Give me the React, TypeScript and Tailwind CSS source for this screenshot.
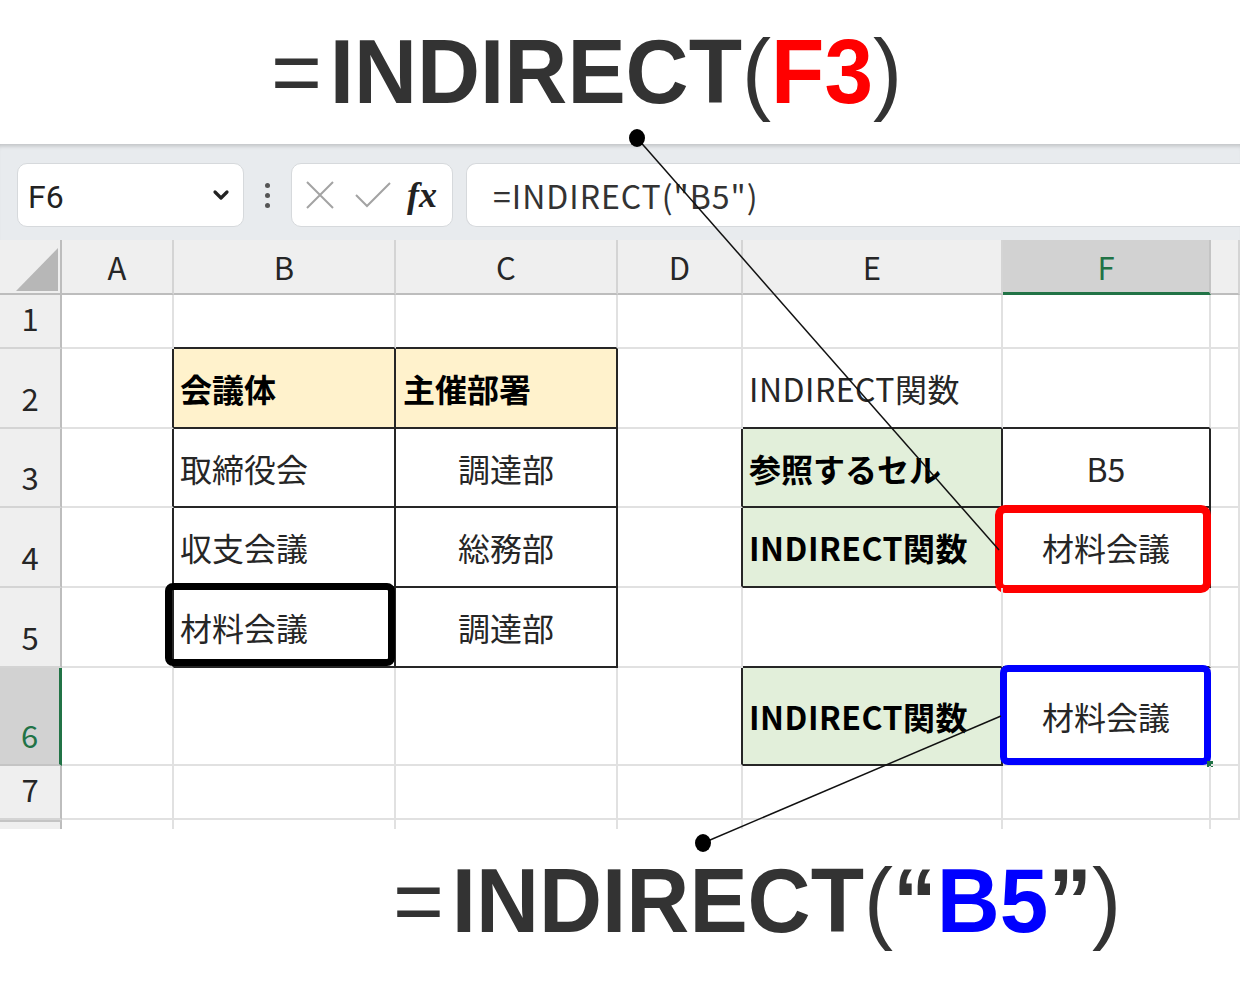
import { ChevronDown } from "lucide-react";
import type { ReactNode } from "react";

const RB: Record<string, string> = {
  g: "border-r-2 border-r-[#e1e1e1]",
  k: "border-r-2 border-r-[#262626]",
};
const BB: Record<string, string> = {
  g: "border-b-2 border-b-[#e1e1e1]",
  k: "border-b-2 border-b-[#262626]",
};

function Cell({
  r = "g",
  b = "g",
  className = "",
  children,
}: {
  r?: string;
  b?: string;
  className?: string;
  children?: ReactNode;
}) {
  return (
    <div className={`relative flex items-center text-[32px] leading-none text-[#262626] ${RB[r]} ${BB[b]} ${className}`}>
      {children}
    </div>
  );
}

function ColHead({ children, sel = false }: { children: ReactNode; sel?: boolean }) {
  return sel ? (
    <div className="flex items-center justify-center bg-[#d2d2d2] border-r-2 border-r-[#c4c4c4] border-b-[3px] border-b-[#217346] text-[31px] leading-none text-[#217346]">
      {children}
    </div>
  ) : (
    <div className="flex items-center justify-center bg-[#efefef] border-r-2 border-r-[#d4d4d4] border-b-2 border-b-[#bdbdbd] text-[31px] leading-none text-[#262626]">
      {children}
    </div>
  );
}

function RowHead({ children, sel = false }: { children?: ReactNode; sel?: boolean }) {
  return sel ? (
    <div className="flex items-end justify-center pb-[14px] bg-[#d2d2d2] border-r-[3px] border-r-[#217346] border-b-2 border-b-[#c4c4c4] text-[31px] leading-none text-[#217346]">
      {children}
    </div>
  ) : (
    <div className="flex items-end justify-center pb-[14px] bg-[#efefef] border-r-2 border-r-[#bdbdbd] border-b-2 border-b-[#d4d4d4] text-[31px] leading-none text-[#262626]">
      {children}
    </div>
  );
}

export default function App() {
  return (
    <div className="relative w-[1240px] h-[1006px] overflow-hidden bg-white font-['Noto_Sans_CJK_JP','Noto_Sans',sans-serif]">
      {/* top title */}
      <div className="h-[144px] pl-[271px] pt-[27px]">
        <div className="flex origin-left scale-x-[0.97] font-['Liberation_Sans',Arial,sans-serif] font-bold text-[90px] leading-none text-[#333333]">
          <span className="mr-[8px] font-normal">=</span>
          <span>INDIRECT</span>
          <span className="font-normal">(</span>
          <span className="text-[#ff0000]">F3</span>
          <span className="font-normal">)</span>
        </div>
      </div>

      {/* formula band */}
      <div className="h-[96px] bg-[#e8ebee] flex items-start pt-[19px] shadow-[inset_0_5px_4px_-3px_rgba(0,0,0,0.18)]">
        <div className="ml-[17px] w-[227px] h-[64px] bg-white rounded-[10px] border border-[#d6d9dc] flex items-center justify-between pl-[10px] pr-[10px]">
          <span className="text-[32px] leading-none text-[#222] font-['Roboto',sans-serif] pt-[4px]">F6</span>
          <ChevronDown strokeWidth={3.2} className="w-[24px] h-[24px] text-[#222]" />
        </div>
        <div className="w-[47px] h-[64px] flex flex-col items-center justify-center gap-[5px]">
          <span className="w-[5px] h-[5px] rounded-full bg-[#555]" />
          <span className="w-[5px] h-[5px] rounded-full bg-[#555]" />
          <span className="w-[5px] h-[5px] rounded-full bg-[#555]" />
        </div>
        <div className="w-[162px] h-[64px] bg-white rounded-[10px] border border-[#d6d9dc] flex items-center pl-[13px] gap-[20px]">
          <svg width="30" height="28" viewBox="0 0 30 28">
            <path d="M2 1 L28 27 M28 1 L2 27" stroke="#a3a3a3" strokeWidth="2" fill="none" />
          </svg>
          <svg width="36" height="26" viewBox="0 0 36 26">
            <path d="M1 13 L12 24 L35 1" stroke="#a3a3a3" strokeWidth="2" fill="none" />
          </svg>
          <span className="font-['Liberation_Serif',serif] italic font-bold text-[36px] leading-none text-[#222] -ml-[4px]">fx</span>
        </div>
        <div className="ml-[13px] flex-1 h-[64px] bg-white rounded-l-[10px] border border-[#d6d9dc] border-r-0 flex items-center pl-[26px] text-[32px] tracking-[1px] leading-none text-[#333]">
          =INDIRECT("B5")
        </div>
      </div>

      {/* grid */}
      <div className="grid grid-cols-[62px_112px_222px_222px_125px_260px_208px_29px] grid-rows-[55px_54px_80px_79px_80px_80px_98px_54px_9px]">
        {/* header row */}
        <div className="relative bg-[#efefef] border-r-2 border-r-[#bdbdbd] border-b-2 border-b-[#bdbdbd]">
          <svg className="absolute left-[16px] top-[8px]" width="42" height="43" viewBox="0 0 42 43">
            <polygon points="0,43 42,0 42,43" fill="#b7b7b7" />
          </svg>
        </div>
        <ColHead>A</ColHead>
        <ColHead>B</ColHead>
        <ColHead>C</ColHead>
        <ColHead>D</ColHead>
        <ColHead>E</ColHead>
        <ColHead sel>F</ColHead>
        <ColHead>{""}</ColHead>

        {/* row 1 */}
        <RowHead>1</RowHead>
        <Cell />
        <Cell b="k" />
        <Cell b="k" />
        <Cell />
        <Cell />
        <Cell />
        <Cell />

        {/* row 2 */}
        <RowHead>2</RowHead>
        <Cell r="k" />
        <Cell r="k" b="k" className="bg-[#fff2cc] pl-[6px] font-bold text-black">会議体</Cell>
        <Cell r="k" b="k" className="bg-[#fff2cc] pl-[7px] font-bold text-black">主催部署</Cell>
        <Cell />
        <Cell b="k" className="pl-[6px] tracking-[0.5px]">INDIRECT関数</Cell>
        <Cell b="k" />
        <Cell />

        {/* row 3 */}
        <RowHead>3</RowHead>
        <Cell r="k" />
        <Cell r="k" b="k" className="pl-[6px]">取締役会</Cell>
        <Cell r="k" b="k" className="justify-center">調達部</Cell>
        <Cell r="k" />
        <Cell r="k" b="k" className="bg-[#e2efda] pl-[6px] font-bold text-black">参照するセル</Cell>
        <Cell r="k" b="k" className="justify-center">B5</Cell>
        <Cell />

        {/* row 4 */}
        <RowHead>4</RowHead>
        <Cell r="k" />
        <Cell r="k" b="k" className="pl-[6px]">収支会議</Cell>
        <Cell r="k" b="k" className="justify-center">総務部</Cell>
        <Cell r="k" />
        <Cell r="k" b="k" className="bg-[#e2efda] pl-[6px] font-bold text-black tracking-[0.5px]">INDIRECT関数</Cell>
        <Cell r="k" b="k" className="justify-center">
          材料会議
          <div className="absolute -left-[8px] -right-[2px] -top-[3px] -bottom-[7px] border-[8px] border-[#ff0000] rounded-[10px]" />
        </Cell>
        <Cell />

        {/* row 5 */}
        <RowHead>5</RowHead>
        <Cell r="k" />
        <Cell r="k" b="k" className="pl-[6px]">
          材料会議
          <div className="absolute -left-[9px] -right-[1px] -top-[5px] bottom-0 border-[7px] border-black rounded-[8px]" />
        </Cell>
        <Cell r="k" b="k" className="justify-center">調達部</Cell>
        <Cell />
        <Cell b="k" />
        <Cell b="k" />
        <Cell />

        {/* row 6 */}
        <RowHead sel>6</RowHead>
        <Cell />
        <Cell />
        <Cell />
        <Cell r="k" />
        <Cell r="k" b="k" className="bg-[#e2efda] pl-[6px] font-bold text-black tracking-[0.5px]">INDIRECT関数</Cell>
        <Cell className="justify-center">
          材料会議
          <div className="absolute -left-[3px] -right-[2px] -top-[3px] -bottom-[1px] border-[7px] border-[#0000ff] rounded-[8px]" />
          <div className="absolute -right-[4px] -bottom-[3px] w-[6px] h-[6px] bg-[#217346]" />
        </Cell>
        <Cell />

        {/* row 7 */}
        <RowHead>7</RowHead>
        <Cell />
        <Cell />
        <Cell />
        <Cell />
        <Cell />
        <Cell />
        <Cell />

        {/* stub row */}
        <div className="bg-[#efefef] border-t-2 border-t-[#c4c4c4] border-r-2 border-r-[#bdbdbd]" />
        <div className="border-r-2 border-r-[#e1e1e1]" />
        <div className="border-r-2 border-r-[#e1e1e1]" />
        <div className="border-r-2 border-r-[#e1e1e1]" />
        <div className="border-r-2 border-r-[#e1e1e1]" />
        <div className="border-r-2 border-r-[#e1e1e1]" />
        <div className="border-r-2 border-r-[#e1e1e1]" />
        <div />
      </div>

      {/* bottom title */}
      <div className="pl-[393px] pt-[27px]">
        <div className="flex origin-left scale-x-[0.97] font-['Liberation_Sans',Arial,sans-serif] font-bold text-[90px] leading-none text-[#333333]">
          <span className="mr-[8px] font-normal">=</span>
          <span>INDIRECT</span>
          <span className="font-normal">(</span>
          <span>“</span>
          <span className="text-[#0000ff]">B5</span>
          <span>”</span>
          <span className="font-normal">)</span>
        </div>
      </div>

      {/* annotation lines */}
      <svg className="absolute inset-0 pointer-events-none" width="1240" height="1006" viewBox="0 0 1240 1006">
        <line x1="637" y1="138" x2="999" y2="550" stroke="#111" strokeWidth="1.5" />
        <ellipse cx="637" cy="138" rx="8" ry="9" fill="#000" />
        <line x1="703" y1="843" x2="1001" y2="716" stroke="#111" strokeWidth="1.5" />
        <ellipse cx="703" cy="843" rx="8" ry="9" fill="#000" />
      </svg>
    </div>
  );
}
